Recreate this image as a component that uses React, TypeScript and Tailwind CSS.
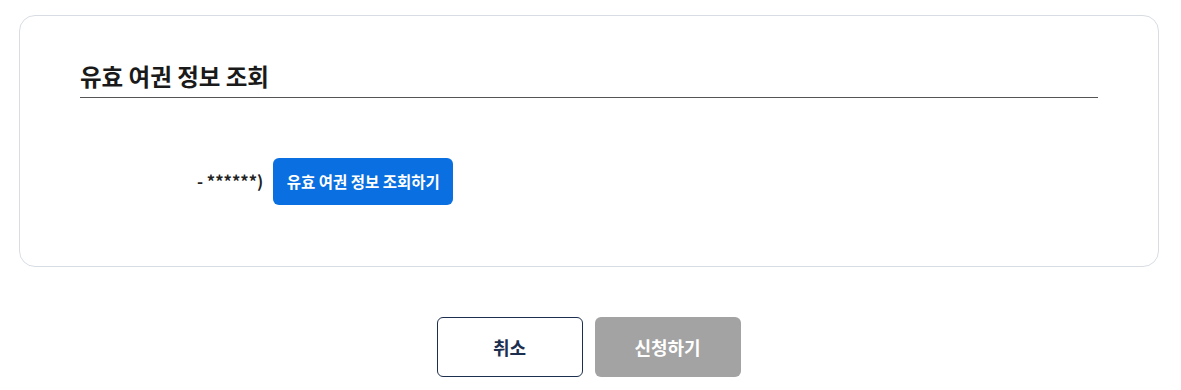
import React from 'react';

const font = { fontFamily: '"Noto Sans CJK KR", "Noto Sans", sans-serif' };

const App: React.FC = () => {
  return (
    <div className="w-[1181px] bg-white pt-[15px]" style={font}>
      <section className="ml-[19px] w-[1140px] h-[252px] rounded-[16px] border border-[#d8dde4] px-[60px] pt-[44px]">
        <h2 className="border-b border-[#555555] pb-[4px] text-[23.5px] font-bold leading-[33px] text-[#1a1a1a]">
          유효 여권 정보 조회
        </h2>
        <div className="mt-[60px] flex items-center pl-[117px]">
          <span className="text-[16.5px] font-bold text-[#222222]">- ******)</span>
          <button className="ml-[10px] h-[47px] w-[180px] rounded-[6px] bg-[#0a6fe0] text-[15.5px] font-bold text-white">
            유효 여권 정보 조회하기
          </button>
        </div>
      </section>
      <div className="mt-[50px] flex justify-center gap-[12px] pr-[4px]">
        <button className="h-[60px] w-[146px] rounded-[6px] border border-[#1c2f4f] bg-white text-[18px] font-bold text-[#1c2f4f]">
          취소
        </button>
        <button className="h-[60px] w-[146px] rounded-[6px] bg-[#a3a3a3] text-[18px] font-bold text-white">
          신청하기
        </button>
      </div>
    </div>
  );
};

export default App;
